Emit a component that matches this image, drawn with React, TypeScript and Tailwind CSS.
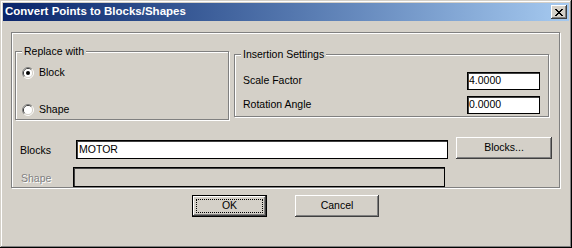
import React from 'react';

// Win2k-style "Convert Points to Blocks/Shapes" dialog

const font = "font-['Liberation_Sans',Arial,sans-serif] text-[10.5px] text-black";
const raised =
  'shadow-[inset_-1px_-1px_0_#404040,inset_1px_1px_0_#ffffff,inset_-2px_-2px_0_#808080,inset_2px_2px_0_#d4d0c8]';
const etched = 'border border-[#808080] shadow-[inset_1px_1px_0_#ffffff,1px_1px_0_#ffffff]';
const sunken = 'bg-white border border-black shadow-[inset_1px_1px_0_#404040]';

function Radio({ checked }: { checked?: boolean }) {
  return (
    <svg width="12" height="12" viewBox="0 0 12 12" className="shrink-0">
      <path d="M2.11 9.89A5.5 5.5 0 0 1 9.89 2.11" stroke="#808080" fill="none" />
      <path d="M9.89 2.11A5.5 5.5 0 0 1 2.11 9.89" stroke="#ffffff" fill="none" />
      <path d="M2.82 9.18A4.5 4.5 0 0 1 9.18 2.82" stroke="#404040" fill="none" />
      <path d="M9.18 2.82A4.5 4.5 0 0 1 2.82 9.18" stroke="#d4d0c8" fill="none" />
      <circle cx="6" cy="6" r="4" fill="#ffffff" />
      {checked && <circle cx="6" cy="6" r="2" fill="#000000" />}
    </svg>
  );
}

function Group({
  title,
  className,
  children,
}: {
  title: string;
  className: string;
  children?: React.ReactNode;
}) {
  return (
    <div className={`relative ${etched} ${className}`}>
      <span className="absolute -top-[7px] left-[6px] bg-[#d4d0c8] px-[2px] leading-[13px]">{title}</span>
      {children}
    </div>
  );
}

function Button({ label, w, isDefault }: { label: string; w: string; isDefault?: boolean }) {
  return (
    <div
      className={`relative flex h-[22px] items-center justify-center bg-[#d4d0c8] ${w} ${
        isDefault ? 'border border-black ' : ''
      }${raised}`}
    >
      {isDefault && <span className="absolute inset-[3px] border border-dotted border-black" />}
      <span className="relative">{label}</span>
    </div>
  );
}

export default function App() {
  return (
    <div
      className={`${font} flex h-[248px] w-[572px] flex-col bg-[#d4d0c8] p-[3px] shadow-[inset_-1px_-1px_0_#000000,inset_1px_1px_0_#d4d0c8,inset_-2px_-2px_0_#808080,inset_2px_2px_0_#ffffff]`}
    >
      {/* title bar */}
      <div className="flex h-[18px] items-center justify-between bg-gradient-to-r from-[#0a246a] to-[#a6caf0] pl-[2px] pr-[2px]">
        <span className="text-[11.5px] font-bold text-white">Convert Points to Blocks/Shapes</span>
        <div className={`flex h-[14px] w-[16px] items-center justify-center bg-[#d4d0c8] ${raised}`}>
          <svg width="8" height="7" viewBox="0 0 8 7">
            <path
              d="M0 0h2v1h1v1h2V1h1V0h2v1H7v1H6v1H5v1h1v1h1v1h1v1H6V6H5V5H3v1H2v1H0V6h1V5h1V4h1V3H2V2H1V1H0z"
              fill="#000000"
            />
          </svg>
        </div>
      </div>

      {/* main frame */}
      <div className={`ml-[8px] mt-[11px] flex h-[156px] w-[549px] flex-col ${etched}`}>
        <div className="flex items-start pl-[3px]">
          <Group title="Replace with" className="mt-[18px] h-[69px] w-[214px]">
            <div className="flex flex-col pl-[6px] pt-[13px]">
              <div className="flex items-center gap-[5px]">
                <Radio checked />
                <span>Block</span>
              </div>
              <div className="mt-[21px] flex items-center gap-[5px]">
                <Radio />
                <span>Shape</span>
              </div>
            </div>
          </Group>
          <Group title="Insertion Settings" className="ml-[5px] mt-[21px] h-[63px] w-[315px]">
            <div className="flex flex-col pl-[8px] pr-[8px] pt-[17px]">
              <div className="flex items-center justify-between">
                <span>Scale Factor</span>
                <div className={`${sunken} h-[18px] w-[73px] pl-[1px] leading-[15px]`}>4.0000</div>
              </div>
              <div className="mt-[6px] flex items-center justify-between">
                <span>Rotation Angle</span>
                <div className={`${sunken} h-[18px] w-[73px] pl-[1px] leading-[15px]`}>0.0000</div>
              </div>
            </div>
          </Group>
        </div>

        <div className="mt-[17px] flex items-start pl-[8px]">
          <span className="mt-[6px] w-[56px]">Blocks</span>
          <div className={`${sunken} mt-[3px] h-[19px] w-[372px] pl-[2px] leading-[16px]`}>MOTOR</div>
          <div className="ml-[8px]">
            <Button label="Blocks..." w="w-[96px]" />
          </div>
        </div>

        <div className="mt-[8px] flex items-start pl-[9px]">
          <span className="mt-[4px] w-[52px] text-[#808080] [text-shadow:1px_1px_0_#ffffff]">Shape</span>
          <div className="h-[20px] w-[372px] border border-black bg-[#d4d0c8] shadow-[inset_1px_1px_0_#404040]" />
        </div>
      </div>

      {/* dialog buttons */}
      <div className="mt-[7px] flex justify-center gap-[28px] pr-[1px]">
        <Button label="OK" w="w-[75px]" isDefault />
        <Button label="Cancel" w="w-[84px]" />
      </div>
    </div>
  );
}
